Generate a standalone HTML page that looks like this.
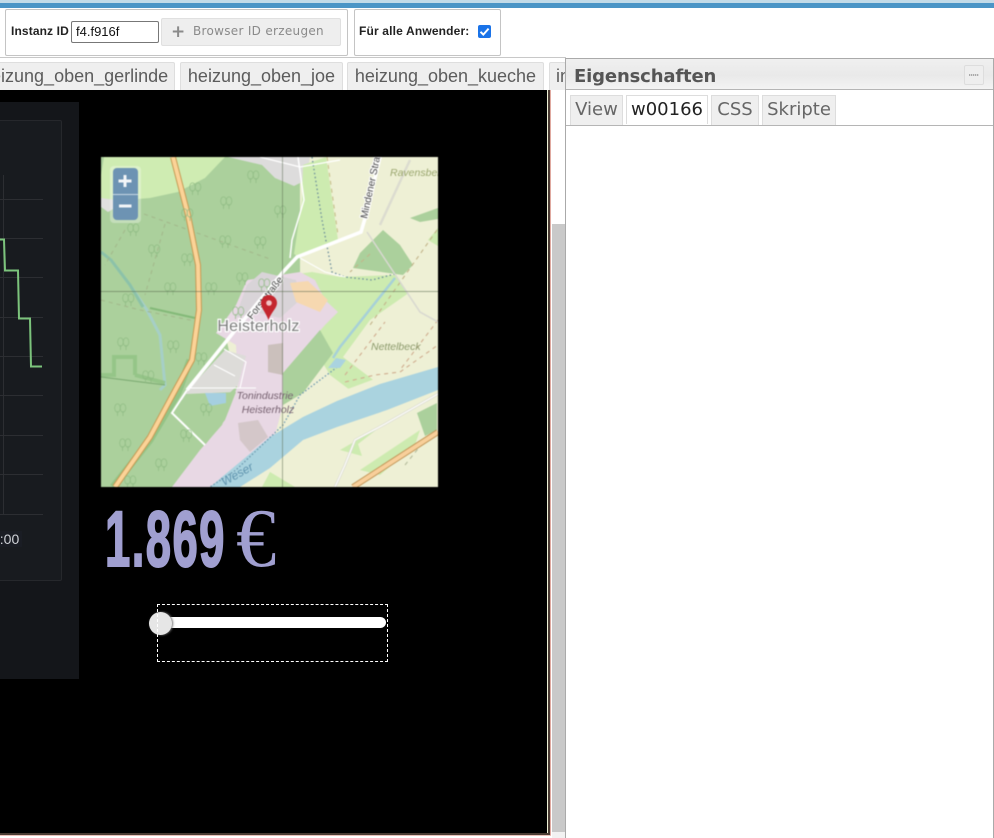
<!DOCTYPE html>
<html lang="de"><head><meta charset="utf-8"><title>Editor</title>
<style>
html,body{margin:0;padding:0;background:#fff}
body{width:994px;height:838px;position:relative;overflow:hidden;font-family:"Liberation Sans",sans-serif}
.a{position:absolute;box-sizing:border-box}
.box{border:1px solid #c4c4c4;border-radius:2px;background:#fff;top:9px;height:47px}
.tab{top:62px;height:28px;background:#efefef;border:1px solid #dedede;border-bottom:0;border-radius:2px 2px 0 0;font-size:18px;color:#5c5c5c;line-height:26px;text-align:center;white-space:nowrap;overflow:hidden}
.pt{top:95px;height:30px;background:#efefef;border:1px solid #ddd;border-bottom:0;font:18px/27px "DejaVu Sans",sans-serif;color:#666;text-align:center;white-space:nowrap}
</style></head><body>
<div class="a" style="left:0;top:0;width:994px;height:3px;background:#c3dbe8"></div>
<div class="a" style="left:0;top:3px;width:994px;height:5px;background:#4b95c6"></div>

<div class="a box" style="left:5px;width:343px"></div>
<div class="a" style="left:11px;top:24px;font:bold 12px/15px 'Liberation Sans',sans-serif;letter-spacing:.12px;color:#222;white-space:nowrap">Instanz ID</div>
<div class="a" style="left:71px;top:21px;width:88px;height:22px;border:1px solid #777;border-radius:2px;background:#fff;font:13px/20px 'Liberation Sans',sans-serif;color:#111;padding-left:4px">f4.f916f</div>
<div class="a" style="left:161px;top:18px;width:180px;height:28px;background:#eee;border:1px solid #e0e0e0;border-radius:2px"></div>
<div class="a" style="left:171px;top:24px;font:bold 17px/17px 'DejaVu Sans',sans-serif;color:#8a8a8a">+</div>
<div class="a" style="left:193px;top:24px;font:12px/15px 'DejaVu Sans',sans-serif;letter-spacing:.3px;color:#8a8a8a;white-space:nowrap">Browser ID erzeugen</div>
<div class="a box" style="left:354px;width:147px"></div>
<div class="a" style="left:359px;top:24px;font:bold 12px/15px 'Liberation Sans',sans-serif;letter-spacing:.16px;color:#222;white-space:nowrap">Für alle Anwender:</div>
<div class="a" style="left:478px;top:25px;width:13px;height:13px;background:#1a73e8;border-radius:2px"><svg width="13" height="13" style="display:block"><path d="M2.5 6.8 5.3 9.6 10.6 3.6" fill="none" stroke="#fff" stroke-width="2"/></svg></div>

<div class="a" style="left:0;top:57px;width:566px;height:1px;background:#c8c8c8"></div>
<div class="a tab" style="left:-12px;width:187px;text-align:left;padding-left:0"><span style="position:absolute;left:-8px;top:0;width:190px;text-align:right;padding-right:0"><span style="margin-right:7px">heizung_oben_gerlinde</span></span></div>
<div class="a tab" style="left:180px;width:163px">heizung_oben_joe</div>
<div class="a tab" style="left:347px;width:197px">heizung_oben_kueche</div>
<div class="a tab" style="left:549px;width:17px;text-align:left;padding-left:6px">in</div>

<div class="a" style="left:0;top:90px;width:547px;height:743px;background:#000"></div>
<div class="a" style="left:547px;top:90px;width:1px;height:743px;background:#eef3d8"></div>
<div class="a" style="left:548px;top:90px;width:2px;height:745px;background:#4a3b33"></div>
<div class="a" style="left:550px;top:90px;width:1px;height:746px;background:#e0a9a0"></div>
<div class="a" style="left:0;top:833px;width:550px;height:2px;background:#4a3b33"></div>
<div class="a" style="left:0;top:835px;width:551px;height:1px;background:#e8c0b8"></div>
<div class="a" style="left:552px;top:224px;width:13px;height:608px;background:#c9c9c9"></div>
<div class="a" style="left:552px;top:832px;width:13px;height:6px;background:#f2f2f2"></div>

<div class="a" style="left:0;top:102px;width:79px;height:577px;background:#14161a"></div>
<div class="a" style="left:-2px;top:120px;width:64px;height:461px;background:#181b1f;border:1px solid #26282c;border-radius:2px"></div>
<svg class="a" style="left:0;top:90px" width="80" height="500" viewBox="0 90 80 500">
<g stroke="#2c2e32" stroke-width="1" fill="none">
<path d="M0 199.500H43M0 238.500H43M0 277.500H43M0 317.500H43M0 356.500H43M0 395.500H43M0 435.500H43M0 474.500H43M0 514.500H43"/>
<path d="M3.500 175V515"/></g>
<path d="M0 239.500H4L5 270.500H18L19 318.500H30L31 366.500H42" fill="none" stroke="#7cc47c" stroke-width="2"/>
</svg>
<div class="a" style="left:-11px;top:531px;font:14px/16px 'Liberation Sans',sans-serif;color:#d0d3d8;white-space:nowrap;background:#1a1d24;padding:0 3px">0:00</div>

<svg class="a" style="left:101px;top:157px;filter:blur(.45px)" width="337" height="330" viewBox="101 157 337 330">
<defs>
<g id="t" fill="none" stroke="#8dba82" stroke-width=".9" opacity=".75"><ellipse cx="-2.500" cy="0" rx="2.800" ry="4.200"/><ellipse cx="3" cy="0" rx="2.800" ry="4.200"/><path d="M-2.500 3V8M3 3V8"/></g>
</defs>
<rect x="101" y="157" width="337" height="330" fill="#eef0d5"/>
<path d="M101 157H300V290H270L240 300 225 333 240 400 215 487H101Z" fill="#abd09c"/>
<path d="M104 157H225L205 178 178 192 150 198 125 200 101 204V175Z" fill="#cfecb2"/>
<path d="M101 198 116 200 118 206 108 212 101 207Z" fill="#e0dfdf"/>
<path d="M228 157H310L306 180 294 186 275 178 262 165Z" fill="#dddcdc"/>
<path d="M303 165 326 157 338 240 300 258 294 254 302 200Z" fill="#cdebb0"/>
<path d="M312 272 340 277 395 275 420 312 413 325 380 385 350 390 330 375 312 345 300 300 290 275Z" fill="#cdebb0"/>
<path d="M370 320 343 357 380 385 438 362 438 300 420 312 413 290Z" fill="#eef0d5"/>
<path d="M373 240 383 230 400 245 413 265 403 275 353 268 360 253Z" fill="#abd09c"/>
<path d="M410 218 438 208V219L420 222Z" fill="#abd09c"/>
<path d="M428 240 438 228V246Z" fill="#cdebb0"/>
<path d="M236 305 247 280 300 272 315 280 325 300 338 312 325 325 312 340 283 373 283 405 275 435 215 487H172L200 450 222 425 238 385 236 345 216 333Z" fill="#e8d8e4"/>
<path d="M247 285 262 272 296 280 300 300 280 318 255 312 235 318Z" fill="#d9d4d8"/>
<path d="M290 283 308 281 328 300 320 312 296 302Z" fill="#f6d8b0"/>
<path d="M283 373 320 330 333 353 303 393 283 405Z" fill="#abd09c"/>
<path d="M268 345 283 343 283 375 268 372Z" fill="#cbc0bc"/>
<path d="M186 392 225 350 246 356 238 385 222 400 180 400Z" fill="#dddcd9"/>
<path d="M172 415 186 394 236 392 225 420 205 445Z" fill="#abd09c"/>
<path d="M205 393H226V403L210 406Z" fill="#a5cfe0"/>
<path d="M238 423 258 420 268 437 250 452 240 440Z" fill="#cec3c2" opacity=".8"/>
<path d="M295 416 337 393 380 377 438 362V487H240L270 468 300 445Z" fill="#eef0d5"/>
<path d="M340 450 380 427 358 444 362 456Z" fill="#cdebb0"/>
<path d="M417 413 437 403V430L425 436Z" fill="#abd09c"/>
<path d="M360 470 420 430 415 445 380 475Z" fill="#cdebb0"/>
<path d="M262 487 270 472 295 487Z" fill="#cdebb0"/>
<path d="M438 367 380 384 337 401 303 417 270 437 210 487H240L270 468 303 440 337 427 387 410 438 390Z" fill="#aad3df"/>
<path d="M101 252 111 260 130 285 147 310 160 335 165 385 160 390" fill="none" stroke="#a6cfc7" stroke-width="3"/>
<path d="M101 252 111 260 130 285 143 307" fill="none" stroke="#8cc2a8" stroke-width="3"/>
<path d="M150 308 195 318" fill="none" stroke="#83b978" stroke-width="2"/>
<path d="M101 375H114V357H135V375M135 375 165 383" fill="none" stroke="#90c283" stroke-width="4" opacity=".8"/>
<path d="M101 377 165 385" fill="none" stroke="#7dab73" stroke-width="1"/>
<path d="M190 360 178 393 150 440 113 487" fill="none" stroke="#8abf7d" stroke-width="7" opacity=".7"/>
<g fill="none" stroke="#a3b98c" stroke-width="1.100" stroke-dasharray="4 4">
<path d="M144 214 200 234 270 259M165 224 145 295M125 230 105 265M101 300 140 310 200 322"/>
<path d="M327 157 338 235" stroke="#c8c08c"/>
<path d="M370 254 350 272M437 230 370 325" stroke="#c3b48a"/>
<path d="M345 382 375 375 400 372 438 345M345 375 385 322M438 320 400 370" stroke="#d0ad8f"/>
<path d="M405 465 425 440" stroke="#b6bd9d"/>
</g>
<path d="M312 157 322 220 332 272 345 277 372 280 395 274" fill="none" stroke="#6b8c9a" stroke-width="1.300" stroke-dasharray="1.500 2.500"/>
<path d="M340 365 300 395 283 425 236 470 210 487" fill="none" stroke="#6f9ab0" stroke-width="1.300" stroke-dasharray="1.500 2"/>
<path d="M395 278 340 347 333 358" fill="none" stroke="#a6d0d8" stroke-width="2.500"/>
<path d="M336 358 346 360 340 368 328 368Z" fill="#aad3df"/>
<path d="M367 232 420 312 438 322" fill="none" stroke="#d8d8d0" stroke-width="1.500"/>
<path d="M410 160 380 225" fill="none" stroke="#dcdcd0" stroke-width="2.500"/>
<path d="M438 394 385 424 355 440 345 465 335 487" fill="none" stroke="#d8d8d0" stroke-width="2.600"/>
<path d="M438 394 385 424 355 440 345 465 335 487" fill="none" stroke="#fbfbf6" stroke-width="1.400"/>
<path d="M298 157 304 200 292 240 290 258" fill="none" stroke="#fff" stroke-width="1.500"/>
<path d="M260 157 300 167 340 160" fill="none" stroke="#fff" stroke-width="1.200"/>
<path d="M300 258 325 272 345 277" fill="none" stroke="#fff" stroke-width="1.100"/>
<path d="M173 157 188 215 198 265 199 310 192 360 177 387 150 437 115 487" fill="none" stroke="#c69a55" stroke-width="6"/>
<path d="M173 157 188 215 198 265 199 310 192 360 177 387 150 437 115 487" fill="none" stroke="#fbd397" stroke-width="4"/>
<path d="M438 432 353 487" fill="none" stroke="#c4995c" stroke-width="6"/>
<path d="M438 432 353 487" fill="none" stroke="#f8cf9a" stroke-width="4"/>
<path d="M380 157 366 215 361 232 297 257 283 272 233 333 187 390" fill="none" stroke="#fff" stroke-width="3.600"/>
<path d="M187 390 172 413 205 445" fill="none" stroke="#fff" stroke-width="2"/>
<path d="M224 349 246 362 240 388M214 365 235 376M190 388H256" fill="none" stroke="#fff" stroke-width="1.100"/>
<use href="#t" x="226" y="201"/><use href="#t" x="253" y="175"/><use href="#t" x="195" y="187"/><use href="#t" x="133" y="228"/><use href="#t" x="187" y="213"/><use href="#t" x="225" y="240"/><use href="#t" x="260" y="241"/><use href="#t" x="154" y="249"/><use href="#t" x="187" y="258"/><use href="#t" x="242" y="277"/><use href="#t" x="170" y="287"/><use href="#t" x="211" y="287"/><use href="#t" x="128" y="298"/><use href="#t" x="238" y="311"/><use href="#t" x="123" y="342"/><use href="#t" x="173" y="345"/><use href="#t" x="201" y="357"/><use href="#t" x="148" y="375"/><use href="#t" x="120" y="408"/><use href="#t" x="206" y="408"/><use href="#t" x="186" y="434"/><use href="#t" x="125" y="443"/><use href="#t" x="161" y="463"/><use href="#t" x="130" y="480"/><use href="#t" x="280" y="210"/><use href="#t" x="264" y="283"/>
<g font-family="'Liberation Sans',sans-serif">
<text x="390" y="176" font-size="10.500" font-style="italic" fill="#9aa66e">Ravensberg</text>
<text x="371" y="350" font-size="10.500" font-style="italic" fill="#8c9a6c">Nettelbeck</text>
<text x="265" y="399" font-size="10.500" font-style="italic" fill="#75606f" text-anchor="middle">Tonindustrie</text>
<text x="268" y="413" font-size="10.500" font-style="italic" fill="#75606f" text-anchor="middle">Heisterholz</text>
<text x="0" y="0" font-size="12" font-style="italic" fill="#5f93ae" transform="translate(224 486) rotate(-29)">Weser</text>
<text x="0" y="0" font-size="10" fill="#444" stroke="#fff" stroke-width="2" paint-order="stroke" transform="translate(252 320) rotate(-52)">Forststraße</text>
<text x="0" y="0" font-size="10" fill="#444" stroke="#fff" stroke-width="2" paint-order="stroke" transform="translate(367 219) rotate(-78)">Mindener Stra</text>
<text x="258.500" y="331" font-size="16" letter-spacing=".2" fill="#7c7c7c" stroke="#fff" stroke-width="2.500" paint-order="stroke" text-anchor="middle">Heisterholz</text>
</g>
<path d="M101 291.500H438" stroke="#5a6a50" stroke-width="1" opacity=".55"/>
<path d="M282.500 157V487" stroke="#5a6a50" stroke-width="1" opacity=".5"/>
<path d="M268.500 320C265 311 261 308 261 303A7.800 7.800 0 0 1 277 303C277 308 272 311 268.500 320Z" fill="#c4262e"/>
<circle cx="269" cy="303" r="2.800" fill="#f2c4c4"/>
<rect x="110" y="166" width="31" height="57" rx="4" fill="#fff" opacity=".3"/>
<rect x="113" y="168" width="25" height="52" rx="4" fill="#6d93b3"/>
<path d="M113 194.500H138" stroke="#c8d8e4" stroke-width="1"/>
<path d="M125 175V187M118.500 181H131.500M119 206H131.500" stroke="#f4f6f8" stroke-width="3"/>
</svg>

<div class="a" style="left:105px;top:494px;width:120px;height:90px;overflow:visible"><span style="position:absolute;left:0;top:0;font:bold 79px/90px 'Liberation Sans',sans-serif;color:#a09fd0;-webkit-text-stroke:2px #a09fd0;transform:scaleX(.575);transform-origin:0 0;white-space:nowrap;letter-spacing:2.500px">1.869</span></div>
<div class="a" style="left:236px;top:489px;width:50px;height:90px"><span style="position:absolute;left:0;top:0;font:84px/100px 'Liberation Serif',serif;color:#a09fd0;transform:scaleX(.96);transform-origin:0 0;white-space:nowrap">€</span></div>

<div class="a" style="left:160px;top:617px;width:226px;height:11px;background:#fff;border-radius:6px"></div>
<div class="a" style="left:149px;top:612px;width:23px;height:23px;background:#e6e6e6;border-radius:50%;box-shadow:1px 0 2px #777"></div>
<div class="a" style="left:157px;top:604px;width:231px;height:58px;border:1px dashed #fff"></div>

<div class="a" style="left:565px;top:58px;width:429px;height:780px;border:1px solid #aaa;border-bottom:0;background:#fff"></div>
<div class="a" style="left:566px;top:59px;width:427px;height:31px;background:linear-gradient(#f0f0f0,#e9e9e9 55%,#f3f3f3);border-bottom:1px solid #b5b5b5"></div>
<div class="a" style="left:574px;top:65px;font:bold 18px/24px 'DejaVu Sans',sans-serif;letter-spacing:-.15px;color:#555;white-space:nowrap">Eigenschaften</div>
<div class="a" style="left:964px;top:65px;width:20px;height:20px;background:#eee;border:1px solid #ddd;border-radius:2px"><svg width="18" height="18" style="display:block"><path d="M4 9H14" stroke="#aaa" stroke-width="2" stroke-dasharray="1.300 .7"/></svg></div>
<div class="a pt" style="left:570px;width:53px">View</div>
<div class="a pt" style="left:626px;width:82px;background:#fff;color:#222;height:31px">w00166</div>
<div class="a pt" style="left:711px;width:48px">CSS</div>
<div class="a pt" style="left:762px;width:74px">Skripte</div>
<div class="a" style="left:566px;top:125px;width:427px;height:1px;background:#b5b5b5"></div>
<div class="a" style="left:626px;top:124px;width:82px;height:1px;background:#fff"></div>
</body></html>
